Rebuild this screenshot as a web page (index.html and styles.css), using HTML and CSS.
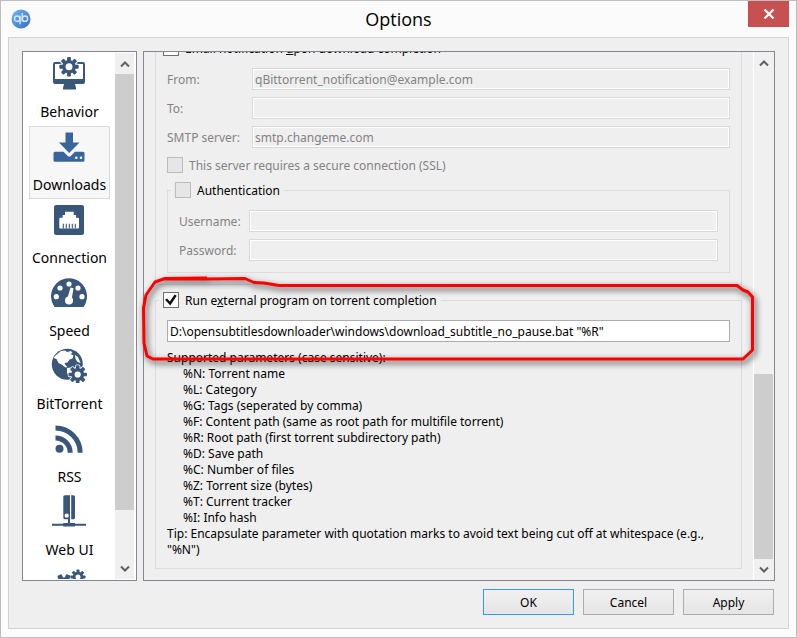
FILE: index.html
```html
<!DOCTYPE html>
<html lang="en">
<head>
<meta charset="utf-8">
<title>Options</title>
<link rel="stylesheet" href="styles.css">
</head>
<body>
<svg class="defs" aria-hidden="true">
  <defs>
    <g id="gear">
      <circle r="7"/>
      <g id="teeth">
        <rect x="-2" y="-10" width="4" height="20" rx="1"/>
        <rect x="-2" y="-10" width="4" height="20" rx="1" transform="rotate(45)"/>
        <rect x="-2" y="-10" width="4" height="20" rx="1" transform="rotate(90)"/>
        <rect x="-2" y="-10" width="4" height="20" rx="1" transform="rotate(135)"/>
      </g>
    </g>
    <linearGradient id="orb" x1="0" y1="0" x2="1" y2="1">
      <stop offset="0" stop-color="#72b4f5"/>
      <stop offset="1" stop-color="#356ebf"/>
    </linearGradient>
  </defs>
</svg>
<div class="window">
  <header class="titlebar">
    <svg class="logo" viewBox="0 0 20 20" aria-hidden="true">
      <circle cx="10" cy="10" r="9.5" fill="url(#orb)"/>
      <g fill="none" stroke="#d4e9fd" stroke-width="1.4">
        <circle cx="6.2" cy="9.7" r="2.7"/>
        <path d="M9 6.7V15.2M11.2 4v8.6"/>
        <circle cx="14" cy="9.7" r="2.7"/>
      </g>
    </svg>
    <h1>Options</h1>
    <button class="close" aria-label="Close">
      <svg viewBox="0 0 12 10"><path d="M1.5 .5l9 9M10.500 .5l-9 9" stroke="#fff" stroke-width="2.2"/></svg>
    </button>
  </header>
  <main class="client">
    <div class="panes">
      <nav class="sidebar">
        <div class="list">
          <a class="item" href="#behavior">
            <svg viewBox="0 0 37 36">
              <path d="M4 7h28a2 2 0 0 1 2 2v18a2 2 0 0 1-2 2h-8l1 4v1.500H12V33l1-4H4a2 2 0 0 1-2-2V9a2 2 0 0 1 2-2zM4 9v15h28V9z" fill-rule="evenodd"/>
              <use href="#gear" class="halo" transform="translate(18 11.700)"/>
              <use href="#gear" transform="translate(18 11.700) scale(.97)"/>
              <circle cx="18" cy="11.700" r="3.500" class="paper"/>
            </svg>
            <span>Behavior</span>
          </a>
          <a class="item selected" href="#downloads">
            <svg viewBox="0 0 37 36">
              <path d="M14.500 4.500h7.500v10h6.500L18.200 25 8 14.500h6.500z"/>
              <path d="M4 23.700h8.500l4 4a2.500 2.500 0 0 0 3.500 0l4-4h8a1.500 1.500 0 0 1 1.500 1.500v7a1.500 1.500 0 0 1-1.500 1.500H4a1.500 1.500 0 0 1-1.500-1.500v-7A1.500 1.500 0 0 1 4 23.700z"/>
              <circle cx="25.300" cy="29.700" r="1.300" class="paper"/>
              <circle cx="30" cy="29.700" r="1.300" class="paper"/>
            </svg>
            <span>Downloads</span>
          </a>
          <a class="item" href="#connection">
            <svg viewBox="0 0 37 36">
              <rect x="3" y="4" width="30" height="30" rx="2"/>
              <path class="paper" d="M14 10.700h8.700v3.300H25v2.700h2a1 1 0 0 1 1 1v8.800a1 1 0 0 1-1 1H9.300a1 1 0 0 1-1-1v-8.800a1 1 0 0 1 1-1h2.400V14H14z"/>
              <path d="M12.300 22.800v4.700M15.300 22.800v4.700M18.300 22.800v4.700M21.300 22.800v4.700M24.300 22.800v4.700" stroke="#3a5679" stroke-width="1.100"/>
            </svg>
            <span>Connection</span>
          </a>
          <a class="item" href="#speed">
            <svg viewBox="0 0 37 36">
              <path d="M3.500 33A18 18 0 1 1 32.500 33Z"/>
              <g class="paper">
                <circle cx="5.300" cy="22.700" r="2.600"/><circle cx="9" cy="14" r="2.600"/>
                <circle cx="18" cy="10" r="2.600"/><circle cx="27" cy="14" r="2.600"/>
                <circle cx="31" cy="22.700" r="2.600"/>
                <circle cx="18" cy="26.500" r="4"/><path d="M16.200 25l3.300-11.500 3 .8-2 11.700z"/>
              </g>
            </svg>
            <span>Speed</span>
          </a>
          <a class="item" href="#bittorrent">
            <svg viewBox="0 0 37 36">
              <circle cx="16.300" cy="17.300" r="15.500"/>
              <path class="paper" d="M5 8l5-4 4-.500 2 1.500 4-1 1.500 2-2 1 3 1.500-1 3-3 1-2 3-3 .5 1 2 2 2-2 .5-4-3-3-1.500-2-4-3-1zM24 8l3 2 2.500 6-3-1-2-3zM16 21l4-.5 3 2-3 4-2 4-2-5z"/>
              <use href="#gear" class="halo" transform="translate(26.700 27.500) scale(.9)"/>
              <use href="#gear" transform="translate(26.700 27.500) scale(.92)"/>
              <circle cx="26.700" cy="27.500" r="3.100" class="paper"/>
            </svg>
            <span>BitTorrent</span>
          </a>
          <a class="item" href="#rss">
            <svg viewBox="0 0 37 36">
              <circle cx="8.500" cy="28.700" r="4"/>
              <path d="M4.500 8A24.700 24.700 0 0 1 29.200 32.700M4.500 18A14.700 14.700 0 0 1 19.200 32.700" fill="none" stroke="#3a5679" stroke-width="5"/>
            </svg>
            <span>RSS</span>
          </a>
          <a class="item" href="#webui">
            <svg viewBox="0 0 37 36">
              <rect x="12.300" y="2.300" width="11.700" height="24" rx="1.500"/>
              <path class="paper" d="M19 2h1.200v25H19z"/>
              <circle cx="15.700" cy="22.700" r="2.100" class="paper"/>
              <path d="M17 25h2v5h5v.8h11v2H24v.7H12.300v-.7H1v-2h11.300V30H17z"/>
            </svg>
            <span>Web UI</span>
          </a>
          <a class="item" href="#advanced" aria-label="Advanced">
            <svg viewBox="0 0 37 36">
              <use href="#gear" transform="translate(13 20) rotate(22) scale(1.200)"/>
              <circle cx="13" cy="20" r="5" class="paper"/>
              <use href="#gear" transform="translate(27 11) scale(.75)"/>
              <circle cx="27" cy="11" r="2.500" class="paper"/>
            </svg>
          </a>
        </div>
        <div class="scrollbar">
          <button class="arrow" aria-label="Scroll up"><svg viewBox="0 0 10 8"><path d="M1 6.500l4-4 4 4"/></svg></button>
          <div class="track"><div class="thumb thumb-top"></div></div>
          <button class="arrow" aria-label="Scroll down"><svg viewBox="0 0 10 8"><path d="M1 1.500l4 4 4-4"/></svg></button>
        </div>
      </nav>
      <section class="content">
        <form class="page">
          <fieldset>
            <legend><label><input type="checkbox"><span>Email notification <u>u</u>pon download completion</span></label></legend>
            <div class="fields wide">
              <label for="from">From:</label><input id="from" type="text" value="qBittorrent_notification@example.com" disabled>
              <label for="to">To:</label><input id="to" type="text" disabled>
              <label for="smtp">SMTP server:</label><input id="smtp" type="text" value="smtp.changeme.com" disabled>
            </div>
            <label class="check"><input type="checkbox" disabled><span>This server requires a secure connection (SSL)</span></label>
            <fieldset>
              <legend><label><input type="checkbox" disabled><span>Authentication</span></label></legend>
              <div class="fields narrow">
                <label for="user">Username:</label><input id="user" type="text" disabled>
                <label for="pass">Password:</label><input id="pass" type="password" disabled>
              </div>
            </fieldset>
          </fieldset>
          <fieldset class="program">
            <legend><label><input type="checkbox" checked><span>Run e<u>x</u>ternal program on torrent completion</span></label></legend>
            <input class="command" type="text" aria-label="Program" value="D:\opensubtitlesdownloader\windows\download_subtitle_no_pause.bat &quot;%R&quot;">
            <div class="help">
              <p>Supported parameters (case sensitive):</p>
              <ul>
                <li>%N: Torrent name</li>
                <li>%L: Category</li>
                <li>%G: Tags (seperated by comma)</li>
                <li>%F: Content path (same as root path for multifile torrent)</li>
                <li>%R: Root path (first torrent subdirectory path)</li>
                <li>%D: Save path</li>
                <li>%C: Number of files</li>
                <li>%Z: Torrent size (bytes)</li>
                <li>%T: Current tracker</li>
                <li>%I: Info hash</li>
              </ul>
              <p>Tip: Encapsulate parameter with quotation marks to avoid text being cut off at whitespace (e.g., "%N")</p>
            </div>
          </fieldset>
        </form>
        <div class="scrollbar">
          <button class="arrow" aria-label="Scroll up"><svg viewBox="0 0 10 8"><path d="M1 6.500l4-4 4 4"/></svg></button>
          <div class="track"><div class="thumb thumb-bottom"></div></div>
          <button class="arrow" aria-label="Scroll down"><svg viewBox="0 0 10 8"><path d="M1 1.500l4 4 4-4"/></svg></button>
        </div>
      </section>
    </div>
    <footer>
      <button class="btn primary">OK</button>
      <button class="btn">Cancel</button>
      <button class="btn">Apply</button>
    </footer>
  </main>
  <svg class="marker" viewBox="0 0 630 100" aria-hidden="true">
    <path d="M24 9H67L105 8.500L114 12.500L124 13L139 15.500H597L603 20L608 22L612.500 27V80L603 89H13L7 86L4 73L3.500 38L6 25L15 12L25 8.500L67 8"/>
  </svg>
</div>
</body>
</html>
```

FILE: styles.css
```css
* { box-sizing: border-box; }

body {
  margin: 0;
  font: 12px/16px "Noto Sans", sans-serif;
  color: #000;
}

.defs { position: absolute; width: 0; height: 0; }

.window {
  position: relative;
  display: flex;
  flex-direction: column;
  height: 100vh;
  padding: 0 7px 8px;
  border: 1px solid #bebebe;
  background: #fbfbfb;
}

.titlebar {
  display: grid;
  grid-template-columns: 41px 1fr 41px;
  align-items: start;
  height: 36px;
}
.logo { width: 20px; height: 20px; margin: 8px 3px; }
.titlebar h1 {
  margin: 0;
  font: 18px/36px "Open Sans", sans-serif;
  text-align: center;
}
.close {
  display: grid;
  place-items: center;
  height: 26px;
  padding: 0;
  border: 0;
  background: #c75050;
}
.close svg { width: 12px; height: 10px; }

.client {
  flex: 1;
  min-height: 0;
  display: flex;
  flex-direction: column;
  gap: 8px;
  padding: 13px;
  border: 1px solid #d3d3d3;
  background: #efefef;
}
.panes { flex: 1; min-height: 0; display: flex; gap: 6px; }

.sidebar, .content {
  display: flex;
  min-height: 0;
  border: 1px solid #828790;
}
.sidebar { width: 115px; padding: 1px 2px 1px 0; background: #fff; }
.content { flex: 1; min-width: 0; }

.list { flex: 1; min-width: 0; padding: 0 5px 0 6px; overflow: hidden; }
.item {
  display: flex;
  flex-direction: column;
  align-items: center;
  gap: 11px;
  height: 73px;
  padding-top: 1px;
  border: 1px solid transparent;
  color: #000;
  font: 14px/20px "Noto Sans", sans-serif;
  text-decoration: none;
  white-space: nowrap;
  fill: #3a5679;
}
.item svg { flex: none; width: 37px; height: 36px; }
.item.selected { border-color: #dadada; background: #f7f7f7; fill: #38659b; }
.paper { fill: #fff; }
.halo { stroke: #fff; stroke-width: 2px; }

.scrollbar {
  display: flex;
  flex-direction: column;
  width: 19px;
  background: #f0f0f0;
}
.content .scrollbar { width: 21px; border-left: 1px solid #fff; padding-right: 1px; }
.arrow {
  display: grid;
  place-items: center;
  height: 21px;
  padding: 0;
  border: 0;
  background: none;
}
.arrow svg { width: 10px; height: 8px; fill: none; stroke: #606060; stroke-width: 2px; }
.track { flex: 1; display: flex; flex-direction: column; }
.thumb { background: #cdcdcd; }
.thumb-top { height: 90%; }
.thumb-bottom { height: 38%; margin-top: auto; }

.page {
  flex: 1;
  min-width: 0;
  display: flex;
  flex-direction: column;
  justify-content: flex-end;
  gap: 7px;
  padding: 0 11px;
  padding-bottom: 11px;
  overflow: hidden;
}
fieldset {
  flex: none;
  min-width: 0;
  margin: 0;
  padding: 12px 11px 11px;
  border: 1px solid #dcdcdc;
}
.program { padding-bottom: 10px; }
legend { margin-left: -8px; padding: 0 4px; }
legend label, .check { display: flex; align-items: center; gap: 6px; height: 16px; }
legend span, .check span, .fields label { padding-top: 2px; }
.check { margin: 9px 0; color: #838383; }

input { font: inherit; margin: 0; }
input[type="checkbox"] {
  appearance: none;
  display: grid;
  place-items: center;
  width: 16px;
  height: 16px;
  border: 1px solid #707070;
  background: #fff;
}
input[type="checkbox"]:disabled { border-color: #bcbcbc; background: #e6e6e6; }
input[type="checkbox"]:checked::before {
  content: "";
  width: 12px;
  height: 12px;
  background: #111;
  clip-path: polygon(0 48%, 18% 38%, 40% 62%, 80% 4%, 98% 14%, 44% 96%);
}

.fields { display: grid; align-items: center; gap: 7px 0; color: #838383; }
.wide { grid-template-columns: 85px 1fr; }
.narrow { grid-template-columns: 70px 1fr; }

input[type="text"], input[type="password"] {
  width: 100%;
  height: 22px;
  padding: 0 2px;
  border: 1px solid #abadb3;
  background: #fff;
  color: #000;
}
input[type="text"]:disabled, input[type="password"]:disabled {
  border-color: #d9d9d9;
  background: #efefef;
  box-shadow: inset 0 0 0 1px #fff;
  color: #838383;
}
.command { display: block; }

.help { margin-top: 8px; }
.help p, .help ul { margin: 0; padding: 0; list-style: none; }
.help li { padding-left: 16px; }

footer { display: flex; justify-content: flex-end; gap: 9px; padding-right: 1px; }
.btn {
  width: 91px;
  height: 26px;
  padding: 2px 0 0;
  border: 1px solid #acacac;
  background: linear-gradient(#f0f0f0, #e5e5e5);
  font: inherit;
  color: #000;
}
.btn.primary { border-color: #3399ff; }

/* Hand-drawn highlight laid over the dialog */
.marker {
  position: absolute;
  left: 139px;
  top: 269px;
  width: 630px;
  height: 100px;
  overflow: visible;
  pointer-events: none;
  fill: none;
  stroke: #f00;
  stroke-width: 3px;
  stroke-linejoin: round;
  filter: drop-shadow(2px 3px 3px rgba(0, 0, 0, .75));
}
```
